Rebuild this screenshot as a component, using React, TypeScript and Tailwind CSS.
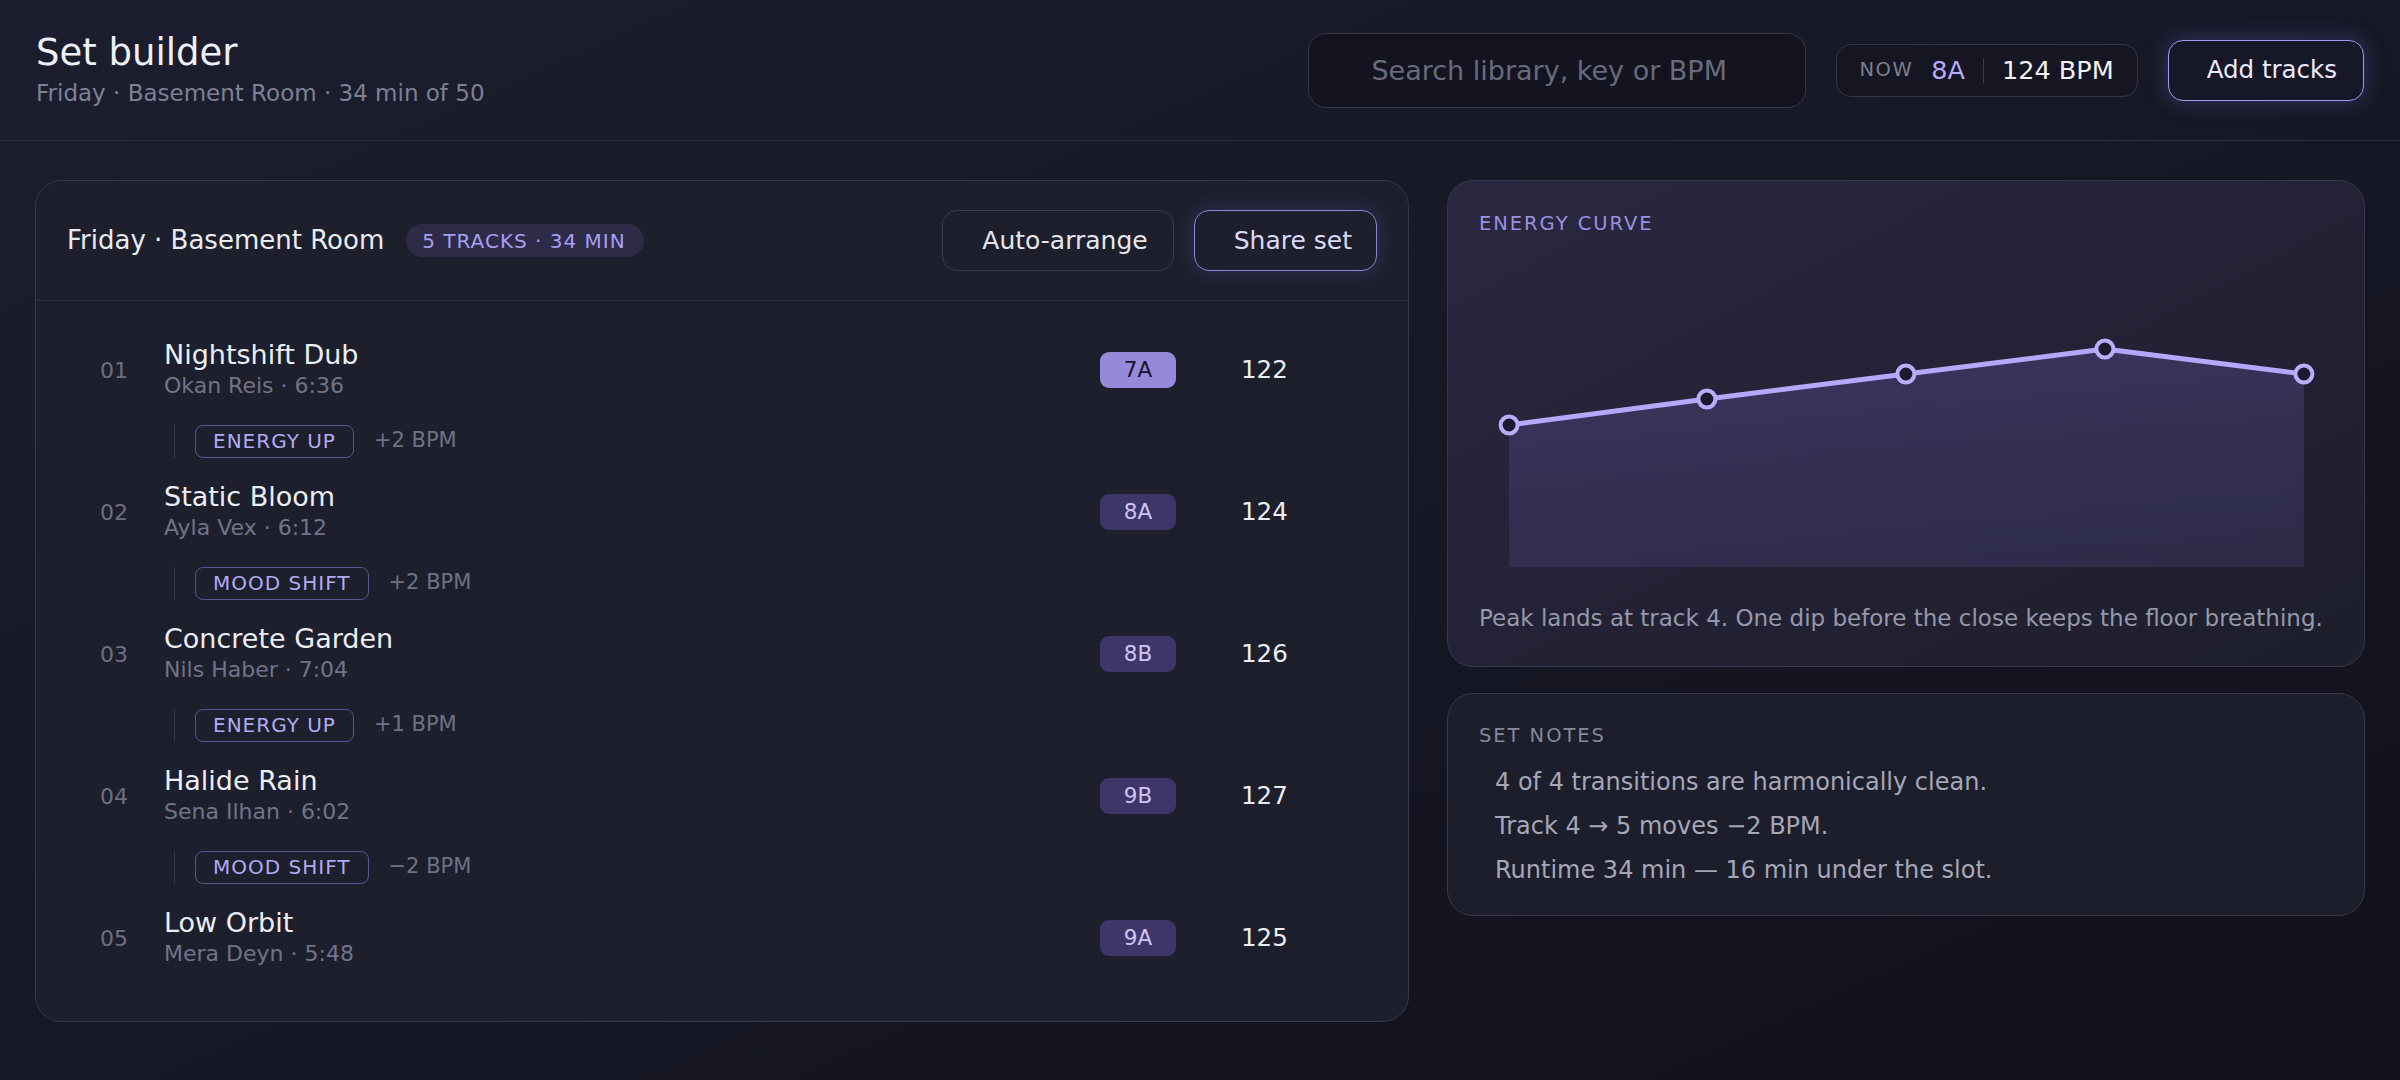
import { useState } from 'react'

const tracks = [
  { n: '01', title: 'Nightshift Dub', artist: 'Okan Reis', len: '6:36', key: '7A', bpm: 122 },
  { n: '02', title: 'Static Bloom', artist: 'Ayla Vex', len: '6:12', key: '8A', bpm: 124 },
  { n: '03', title: 'Concrete Garden', artist: 'Nils Haber', len: '7:04', key: '8B', bpm: 126 },
  { n: '04', title: 'Halide Rain', artist: 'Sena Ilhan', len: '6:02', key: '9B', bpm: 127 },
  { n: '05', title: 'Low Orbit', artist: 'Mera Deyn', len: '5:48', key: '9A', bpm: 125 },
]

const transitions = [
  { tag: 'ENERGY UP', delta: '+2 BPM' },
  { tag: 'MOOD SHIFT', delta: '+2 BPM' },
  { tag: 'ENERGY UP', delta: '+1 BPM' },
  { tag: 'MOOD SHIFT', delta: '\u22122 BPM' },
]

// energy curve points, in svg units (853 x 300)
const points = [
  [29.6, 158],
  [227.4, 132],
  [426.4, 107],
  [625.4, 82],
  [824.4, 107],
]

function EnergyChart() {
  const line = points.map((p) => p.join(',')).join(' ')
  const area = `29.6,300 ${line} 824.4,300`
  return (
    <svg viewBox="0 0 853 300" className="mt-[30px] block h-[300px] w-full">
      <defs>
        <linearGradient id="fill" x1="0" y1="0" x2="0" y2="1">
          <stop offset="0%" stopColor="#7a6bd0" stopOpacity="0.24" />
          <stop offset="100%" stopColor="#6a5eb8" stopOpacity="0.18" />
        </linearGradient>
      </defs>
      <polygon points={area} fill="url(#fill)" />
      <polyline
        points={line}
        fill="none"
        stroke="#b3a8fb"
        strokeWidth="5"
        strokeLinejoin="round"
        strokeLinecap="round"
      />
      {points.map(([x, y], i) => (
        <circle key={i} cx={x} cy={y} r="8.5" fill="#1b1a2e" stroke="#b9aefc" strokeWidth="4" />
      ))}
    </svg>
  )
}

export default function App() {
  const [query, setQuery] = useState('')

  return (
    <div
      className="min-h-screen w-full bg-gradient-to-br from-[#1c1e2f] via-[#171826] to-[#10111a] text-[#eceef5]"
      style={{ fontFamily: '"DejaVu Sans", "Noto Sans", sans-serif' }}
    >
      {/* Top bar */}
      <header className="flex h-[141px] items-center justify-between border-b border-[#2b2d3b] px-[36px]">
        <div>
          <h1 className="text-[37px] leading-[43px] text-[#eef0f6]">Set builder</h1>
          <p className="mt-[4px] text-[23px] leading-[31.5px] text-[#7e8195]">
            Friday · Basement Room · 34 min of 50
          </p>
        </div>

        <div className="flex items-center gap-[30px]">
          <input
            value={query}
            onChange={(e) => setQuery(e.target.value)}
            placeholder="Search library, key or BPM"
            className="h-[75px] w-[498px] rounded-[18px] border border-[#363848] bg-[#131420] pl-[62px] pr-[20px] text-[27px] text-[#e6e7ee] outline-none placeholder:text-[#686b7d]"
          />

          <div className="flex h-[53px] items-center rounded-[15px] border border-[#34364a] bg-[#151622] pl-[22px] pr-[23px]">
            <span className="text-[19.5px] tracking-[0.08em] text-[#7b7e90]">NOW</span>
            <span className="ml-[18px] text-[25.5px] text-[#b6abff]">8A</span>
            <span className="mx-[18px] h-[25px] w-px bg-[#3b3d4f]"></span>
            <span className="text-[25.5px] text-[#f1f1f6]">124 BPM</span>
          </div>

          <button className="flex h-[61px] items-center rounded-[15px] border-[1.5px] border-[#a298ef] bg-[#161727] pl-[38px] pr-[26px] text-[24.5px] text-[#ece9ff] shadow-[0_0_22px_rgba(140,124,255,0.28)]">
            Add tracks
          </button>
        </div>
      </header>

      <main className="grid grid-cols-[1374px_1fr] items-start gap-[38px] px-[35px] pt-[39px]">
        {/* Set list */}
        <section className="rounded-[26px] border border-[#36384a] bg-[#1d1f2c]">
          <div className="flex h-[120px] items-center justify-between border-b border-[#2f3141] px-[31px]">
            <div className="flex items-center gap-[22px]">
              <h2 className="text-[26px] text-[#eaebf1]">Friday · Basement Room</h2>
              <span className="flex h-[33px] items-center rounded-full bg-[#2d2b48] pl-[16px] pr-[18px] text-[20px] tracking-[0.05em] text-[#a99ff0]">
                5 TRACKS · 34 MIN
              </span>
            </div>
            <div className="flex items-center gap-[20px]">
              <button className="flex h-[61px] items-center rounded-[15px] border border-[#3b3d4f] pl-[39px] pr-[25px] text-[25px] text-[#e6e7ee]">
                Auto-arrange
              </button>
              <button className="flex h-[61px] items-center rounded-[15px] border-[1.5px] border-[#8d84d8] pl-[39px] pr-[24px] text-[25px] text-[#dcd8fb] shadow-[0_0_22px_rgba(130,115,240,0.22)]">
                Share set
              </button>
            </div>
          </div>

          <div className="px-[64px] pb-[51px] pt-[37px]">
            {tracks.map((t, i) => (
              <div key={t.n}>
                <div className="flex h-[64px] items-center">
                  <span className="w-[64px] text-[22px] text-[#6d7082]">{t.n}</span>
                  <div className="-mt-[2px] flex-1">
                    <div className="text-[27px] leading-[32px] text-[#eceef5]">{t.title}</div>
                    <div className="text-[22px] leading-[29px] text-[#717489]">
                      {t.artist} · {t.len}
                    </div>
                  </div>
                  <span
                    className={
                      i === 0
                        ? 'flex h-[36px] w-[76px] items-center justify-center rounded-[9px] bg-[#958ad9] text-[21.5px] text-[#17152b]'
                        : 'flex h-[36px] w-[76px] items-center justify-center rounded-[9px] bg-[#3e3668] text-[21.5px] text-[#cdc5f4]'
                    }
                  >
                    {t.key}
                  </span>
                  <span className="ml-[65px] w-[103px] text-[24.5px] text-[#eceef4]">{t.bpm}</span>
                </div>

                {transitions[i] && (
                  <div className="my-[21px] ml-[74px] flex h-[36px] items-center">
                    <span className="h-[33px] w-px bg-[#34364a]"></span>
                    <span className="ml-[20px] flex h-[33px] items-center rounded-[8px] border-[1.5px] border-[#59538f] px-[17px] text-[20px] tracking-[0.05em] text-[#b3aaf3]">
                      {transitions[i].tag}
                    </span>
                    <span className="ml-[20px] text-[21px] text-[#6f7285]">{transitions[i].delta}</span>
                  </div>
                )}
              </div>
            ))}
          </div>
        </section>

        {/* Right column */}
        <div className="flex flex-col gap-[26px]">
          <section className="rounded-[26px] border border-[#363849] bg-gradient-to-br from-[#29283f] via-[#232236] to-[#1e1f2c] px-[31px] pb-[31px] pt-[29px]">
            <h3 className="text-[19.5px] leading-[27px] tracking-[0.1em] text-[#9b90e2]">ENERGY CURVE</h3>
            <EnergyChart />
            <p className="mt-[36px] text-[23px] leading-[31.5px] text-[#9698ab]">
              Peak lands at track 4. One dip before the close keeps the floor breathing.
            </p>
          </section>

          <section className="rounded-[26px] border border-[#363849] bg-[#1c1e2b] px-[31px] pb-[27px] pt-[28px]">
            <h3 className="text-[19.5px] leading-[27px] tracking-[0.1em] text-[#85889a]">SET NOTES</h3>
            <ul className="mt-[15px] flex flex-col gap-[8px] pl-[16px] text-[24px] leading-[36px] text-[#a5a7b9]">
              <li>4 of 4 transitions are harmonically clean.</li>
              <li>Track 4 → 5 moves −2 BPM.</li>
              <li>Runtime 34 min — 16 min under the slot.</li>
            </ul>
          </section>
        </div>
      </main>
    </div>
  )
}
